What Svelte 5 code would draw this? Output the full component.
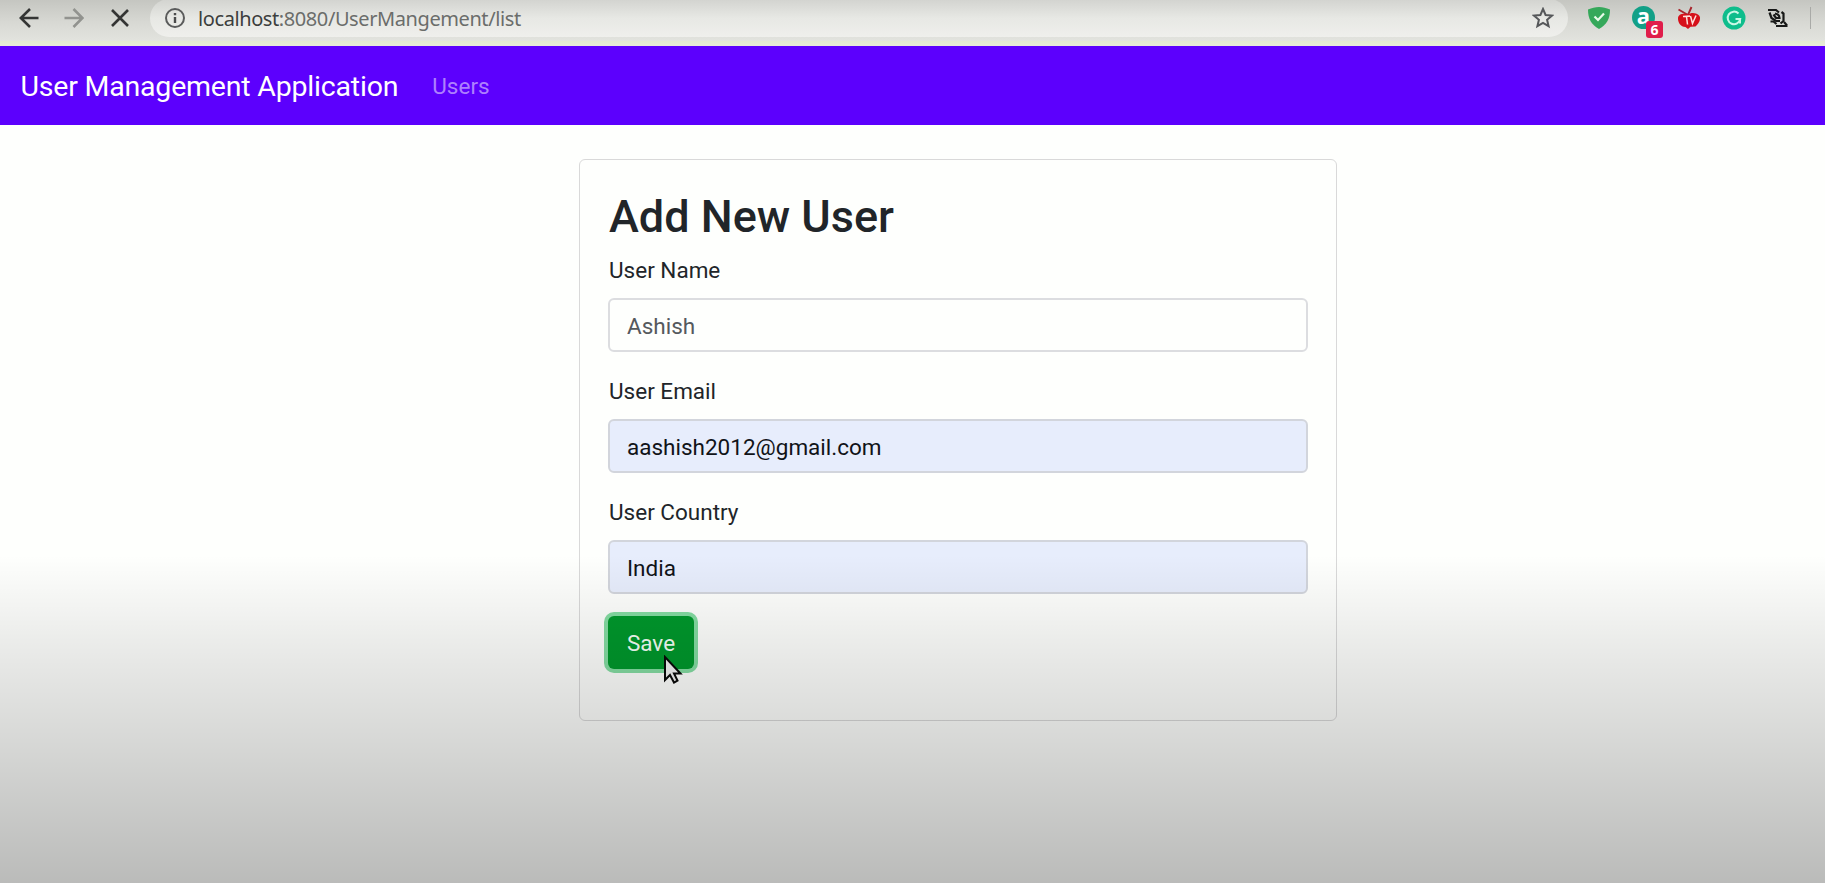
<script>
  const fields = [
    { id: 'name', label: 'User Name', value: 'Ashish', filled: false },
    { id: 'email', label: 'User Email', value: 'aashish2012@gmail.com', filled: true },
    { id: 'country', label: 'User Country', value: 'India', filled: true }
  ];
</script>

<div class="page">
  <div class="toolbar">
    <svg class="back" width="20" height="20" viewBox="0 0 20 20"><path d="M19.500 10H2M11 1L1.800 10l9.200 9" /></svg>
    <svg class="forward" width="20" height="20" viewBox="0 0 20 20"><path d="M.5 10H18M9.500 1l9 9-9 9" /></svg>
    <svg class="stop" width="18" height="18" viewBox="0 0 18 18"><path d="M1 1l16 16M17 1L1 17" /></svg>
    <div class="address">
      <svg width="22" height="22" viewBox="0 0 22 22"><circle cx="11" cy="11" r="9" fill="none" stroke="#5a5b5b" stroke-width="2" /><path d="M11 10v6M11 6v2.200" stroke="#4a4b4b" stroke-width="2.400" /></svg>
      <span class="url"><b>localhost</b>:8080/UserMangement/list</span>
      <svg class="star" width="22" height="22" viewBox="0 0 22 22"><path d="M11 2l2.600 6 6.400.6-4.900 4.200 1.500 6.400-5.600-3.400-5.600 3.400 1.500-6.400L2 8.600 8.400 8z" fill="none" stroke="#56585a" stroke-width="2" /></svg>
    </div>
    <div class="extensions">
      <svg width="24" height="24" viewBox="0 0 24 24"><path d="M12 1c4 0 7 1 11 2.500 0 9-3 15-11 19.500C4 18.500 1 12.500 1 3.500 5 2 8 1 12 1z" fill="#35a85a" /><path d="M7.500 10.500l3.500 3.500 6-6.500" fill="none" stroke="#e8fbe9" stroke-width="2.200" /></svg>
      <div class="badged">
        <span class="letter">a</span>
        <span class="badge">6</span>
      </div>
      <svg width="24" height="24" viewBox="0 0 24 24"><path d="M1.500 3.500L11 9l3.500-8" fill="none" stroke="#a8242c" stroke-width="1.900" /><path d="M11 8.500c2-1.500 5-2 8-1 3 1 4.500 3 4 5.500-.3 3-2.500 6-4.500 7.500l-5 .3-2.500 2.200-2.500-2c-5 0-7.500-4.500-7.500-8.500C1 8 7 7 11 8.500z" fill="#d6101a" /><path d="M6 10.500l7-.5M9.500 10.500l1 8M13.500 10l2 7.500 3.500-8" fill="none" stroke="#ffe0dc" stroke-width="1.500" /></svg>
      <svg width="24" height="24" viewBox="0 0 24 24"><circle cx="12" cy="12" r="11.500" fill="#0ebd8c" /><path d="M16.500 7.500a6.300 6.300 0 1 0 1.700 5.500h-4.700M18 13v4.500" fill="none" stroke="#c9f7e6" stroke-width="2" /></svg>
      <svg width="22" height="20" viewBox="0 0 22 20"><g fill="none" stroke="#171817" stroke-width="2.200"><path d="M1 2h8l3 2.500M2.500 4.500l2 5.500 4.500 3h4" /><path d="M8 5.500c3 .5 4.500 2 4.500 4.500H9L6.500 6.500" /><path d="M14.500 4l2 1.500v7.500l-3 2.500M3.500 13.500h3l3 2.500" /><path d="M9 18h11.500M17 14l3 3.500" /></g></svg>
    </div>
    <i class="divider"></i>
  </div>

  <nav>
    <span class="brand">User Management Application</span>
    <span class="link">Users</span>
  </nav>

  <main>
    <form class="card">
      <h2>Add New User</h2>
      {#each fields as field (field.id)}
        <div class="group">
          <label for={field.id}>{field.label}</label>
          <input id={field.id} class:filled={field.filled} value={field.value} />
        </div>
      {/each}
      <div class="save">
        <button type="button">Save</button>
        <svg class="cursor" width="20" height="30" viewBox="0 0 20 30"><path d="M2 2v23l5-5 4 7.500 3.500-2-3.500-7h6.500z" fill="#f1f1f1" stroke="#090909" stroke-width="2" /></svg>
      </div>
    </form>
  </main>
  <div class="shade"></div>
</div>

<style>
  :global(body) { margin: 0; overflow: hidden; }
  .page {
    position: relative;
    box-sizing: border-box;
    height: 883px;
    display: flex;
    flex-direction: column;
    overflow: hidden;
    background: #fefffd;
    font-family: Roboto, sans-serif;
    font-size: 22.5px;
    color: #212529;
  }
  .toolbar {
    box-sizing: border-box;
    flex: none;
    height: 46px;
    padding: 0 14px 10px 19px;
    display: flex;
    align-items: center;
    background: linear-gradient(#c5c6c1, #d8d9d4 50%, #e2e3de 88%, #e5e9d2 90%, #e8ebd8);
  }
  .toolbar > svg { flex: none; fill: none; stroke: #343534; stroke-width: 2.6; }
  .toolbar > .forward { margin-left: 25px; stroke: #92938f; }
  .toolbar > .stop { margin-left: 27px; }
  .address {
    box-sizing: border-box;
    width: 1418px;
    height: 38px;
    margin-left: 21px;
    padding: 0 14px;
    display: flex;
    align-items: center;
    border-radius: 19px;
    background: linear-gradient(#d2d3cf, #e7e8e4 50%, #efefec);
  }
  .url {
    margin-left: 12px;
    font-family: "Noto Sans", sans-serif;
    font-size: 20px;
    letter-spacing: -0.41px;
    color: #6b6d6b;
    white-space: nowrap;
  }
  .url b { font-weight: 400; color: #3c3e3d; }
  .star { margin-left: auto; }
  .extensions { margin-left: 19px; display: flex; align-items: center; gap: 21px; }
  .badged { position: relative; width: 24px; height: 24px; }
  .letter {
    display: block;
    width: 23px;
    height: 23px;
    border-radius: 50%;
    background: #12a087;
    color: #fff;
    font: 700 22px/19px "Open Sans", sans-serif;
    text-align: center;
  }
  .badge {
    position: absolute;
    left: 14px;
    top: 15px;
    width: 17px;
    height: 17px;
    border-radius: 3px;
    background: #e01d4b;
    color: #fff;
    font: 700 14px/17px "Open Sans", sans-serif;
    text-align: center;
  }
  .divider { width: 1px; height: 22px; margin-left: auto; background: #a9aaa7; }
  nav {
    box-sizing: border-box;
    flex: none;
    height: 79px;
    padding: 0 20.500px;
    display: flex;
    align-items: center;
    gap: 34px;
    background: #5c00fd;
  }
  .brand {
    padding-top: 2px;
    font-size: 28.5px;
    letter-spacing: -0.2px;
    color: #fff;
    white-space: nowrap;
  }
  .link { color: #ae80fe; }
  main { display: flex; padding: 34px 0 0 579px; }
  .card {
    box-sizing: border-box;
    width: 758px;
    height: 562px;
    padding: 28px;
    border: 1.500px solid #d9d9d9;
    border-radius: 6px;
  }
  h2 { margin: 0 0 9px; padding: 2px 0 0 1px; font-size: 45px; line-height: 54px; font-weight: 500; }
  .group { margin-bottom: 22px; }
  label { display: block; padding-left: 1px; line-height: 34px; margin-bottom: 11px; }
  input {
    box-sizing: border-box;
    display: block;
    width: 700px;
    height: 54px;
    padding: 2px 17px 0;
    border: 2px solid #dcdde0;
    border-radius: 6px;
    outline: none;
    background: #fefffd;
    font: inherit;
    color: #55595d;
  }
  input.filled { background: #e7edfc; border-color: #d2d5dc; color: #111318; }
  .save { position: relative; }
  button {
    display: block;
    width: 86px;
    height: 53px;
    padding: 0;
    border: 0;
    border-radius: 6px;
    background: #00982c;
    box-shadow: 0 0 0 4px #84dca2;
    color: #f4fff6;
    font: inherit;
  }
  .cursor { position: absolute; left: 55px; top: 39px; }
  .shade {
    position: absolute;
    inset: 555px 0 0;
    background: linear-gradient(transparent, rgba(0, 0, 0, .075) 26%, rgba(0, 0, 0, .265));
    pointer-events: none;
  }
</style>
